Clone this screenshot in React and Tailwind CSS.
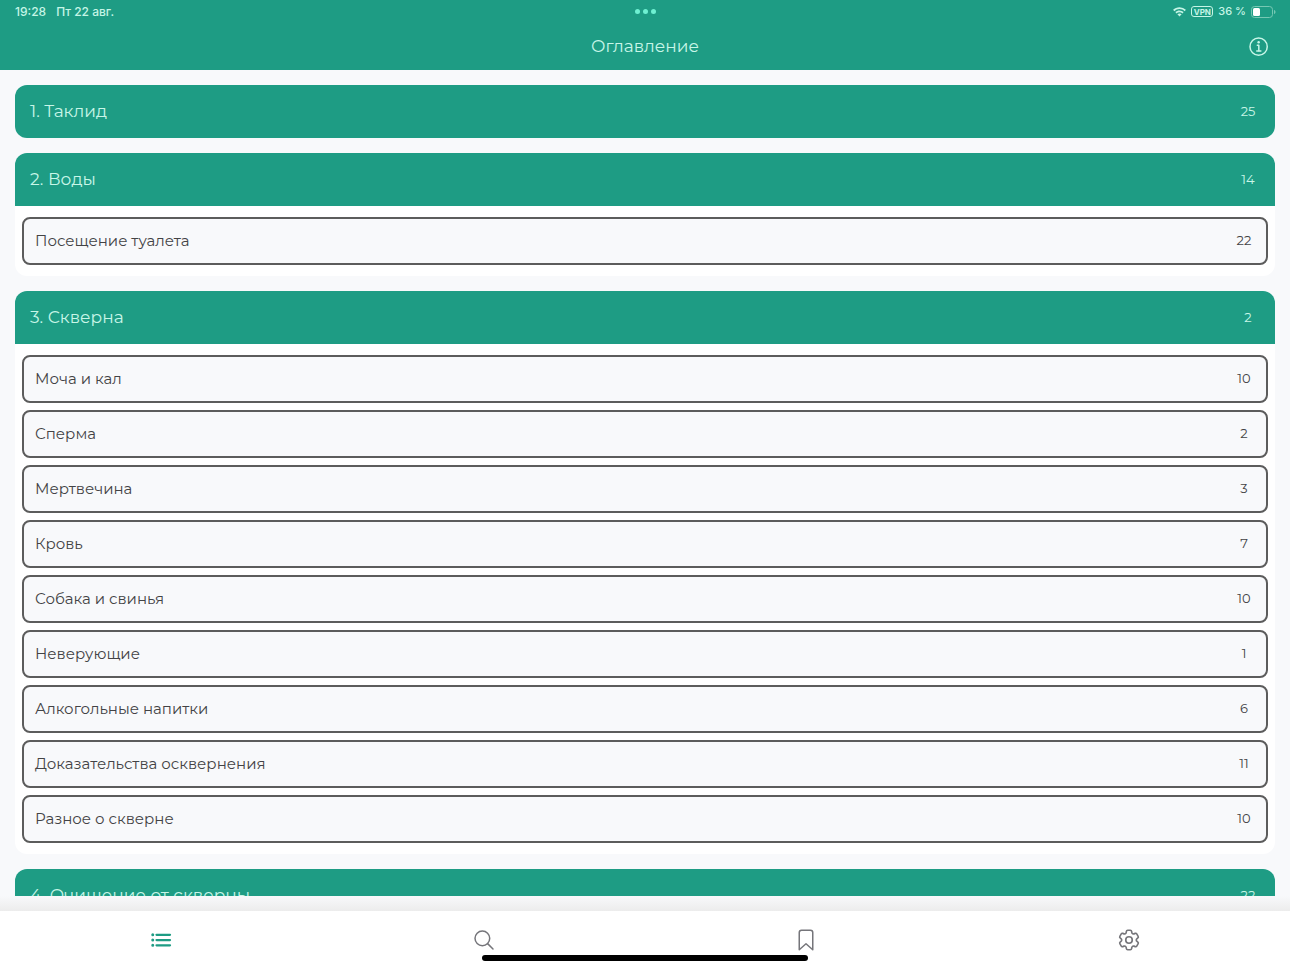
import React from "react";
import { HiOutlineCog6Tooth } from "react-icons/hi2";
import {
  IoBookmarkOutline,
  IoInformationCircleOutline,
  IoList,
  IoSearchOutline,
} from "react-icons/io5";

const chapters = [
  { title: "1. Таклид", count: 25, items: [] },
  { title: "2. Воды", count: 14, items: [["Посещение туалета", 22]] },
  {
    title: "3. Скверна",
    count: 2,
    items: [
      ["Моча и кал", 10],
      ["Сперма", 2],
      ["Мертвечина", 3],
      ["Кровь", 7],
      ["Собака и свинья", 10],
      ["Неверующие", 1],
      ["Алкогольные напитки", 6],
      ["Доказательства осквернения", 11],
      ["Разное о скверне", 10],
    ],
  },
  { title: "4. Очищение от скверны", count: 22, items: [] },
];

const tabs = [
  { label: "Оглавление", Icon: IoList, size: "size-6", active: true },
  { label: "Поиск", Icon: IoSearchOutline, size: "size-6" },
  { label: "Закладки", Icon: IoBookmarkOutline, size: "size-6" },
  { label: "Настройки", Icon: HiOutlineCog6Tooth, size: "size-[26px]" },
];

function StatusBar() {
  return (
    <div className="grid h-[23px] grid-cols-3 items-center pr-[14px] pl-[15px] font-['Inter',sans-serif] text-[11px] font-medium text-[#c5f5e6]">
      <div className="flex gap-[10px] text-[12px]">
        <span>19:28</span>
        <span>Пт 22 авг.</span>
      </div>
      <div className="flex justify-center gap-[3px]">
        <span className="size-[5px] rounded-full bg-[#6ff0d2]" />
        <span className="size-[5px] rounded-full bg-[#6ff0d2]" />
        <span className="size-[5px] rounded-full bg-[#6ff0d2]" />
      </div>
      <div className="flex items-center justify-end gap-[5px]">
        <svg viewBox="0 0 14 10" className="h-[10px] w-[13px]" fill="currentColor" aria-hidden="true">
          <path d="M7 0C4.3 0 1.9 1 .1 2.7l1.3 1.4A8.200 8.200 0 0 1 7 1.900c2.200 0 4.100.8 5.600 2.200l1.300-1.400A10 10 0 0 0 7 0z" />
          <path d="M7 3.300c-1.700 0-3.300.7-4.500 1.800l1.300 1.400A4.700 4.700 0 0 1 7 5.200c1.200 0 2.300.5 3.200 1.300l1.300-1.400A6.600 6.600 0 0 0 7 3.300z" />
          <path d="M7 6.500c-.9 0-1.700.3-2.300.9L7 9.900l2.300-2.500c-.6-.6-1.400-.9-2.300-.9z" />
        </svg>
        <span className="flex h-[11px] w-[22px] items-center justify-center rounded-[3px] border border-current text-[8px] leading-none font-bold">
          VPN
        </span>
        <span>36 %</span>
        <svg viewBox="0 0 25 12" className="h-3 w-[25px]" aria-hidden="true">
          <rect x="0.500" y="0.500" width="21" height="11" rx="3" fill="none" stroke="#76c8b3" />
          <rect x="2" y="2" width="7" height="8" rx="1.500" fill="#fff" />
          <path d="M23 4v4c1-.4 1.500-1.100 1.500-2S24 4.400 23 4z" fill="#76c8b3" />
        </svg>
      </div>
    </div>
  );
}

function Chapter({ title, count, items }) {
  return (
    <section className="shrink-0 overflow-hidden rounded-xl bg-white">
      <h2>
        <button
          type="button"
          className="flex h-[53px] w-full items-center justify-between bg-[#1e9c84] pr-[17px] pl-[15px] text-left text-[#c8f6e8]"
        >
          <span className="text-[17px]">{title}</span>
          <span className="w-5 text-center text-[13px]">{count}</span>
        </button>
      </h2>
      {items.length > 0 && (
        <ul className="flex flex-col gap-[7px] px-[7px] py-[11px]">
          {items.map(([name, total]) => (
            <li key={name}>
              <button
                type="button"
                className="flex h-12 w-full items-center justify-between rounded-lg border-2 border-[#5c5c5c] bg-[#f8f9fb] pr-[12px] pl-[11px] text-left text-[#434345]"
              >
                <span className="text-[15px]">{name}</span>
                <span className="w-5 text-center text-[13px]">{total}</span>
              </button>
            </li>
          ))}
        </ul>
      )}
    </section>
  );
}

export default function App() {
  return (
    <div className="relative flex h-screen flex-col overflow-hidden bg-[#f8f9fb] font-['Montserrat','Inter',sans-serif]">
      <header className="shrink-0 bg-[#1e9c84]">
        <StatusBar />
        <div className="grid h-[47px] grid-cols-[1fr_auto_1fr] items-center px-[19px] text-[#c8f6e8]">
          <h1 className="col-start-2 text-[17px]">Оглавление</h1>
          <button type="button" aria-label="Информация" className="justify-self-end">
            <IoInformationCircleOutline className="size-6" />
          </button>
        </div>
      </header>

      <main className="flex min-h-0 flex-1 flex-col gap-[15px] overflow-hidden px-[15px] pt-[15px]">
        {chapters.map((chapter) => (
          <Chapter key={chapter.title} {...chapter} />
        ))}
      </main>

      <div className="h-[15px] shrink-0 bg-linear-to-b from-[#f8f9fb] to-[#ececec]" />
      <nav className="grid h-[57px] shrink-0 grid-cols-4 bg-white">
        {tabs.map(({ label, Icon, size, active }) => (
          <a
            key={label}
            href="#"
            aria-label={label}
            className={`flex items-center justify-center ${active ? "text-[#1e9c84]" : "text-[#75757a]"}`}
          >
            <Icon className={size} />
          </a>
        ))}
      </nav>
      <div className="absolute bottom-[7px] left-1/2 h-[6px] w-[326px] -translate-x-1/2 rounded-full bg-black" />
    </div>
  );
}
